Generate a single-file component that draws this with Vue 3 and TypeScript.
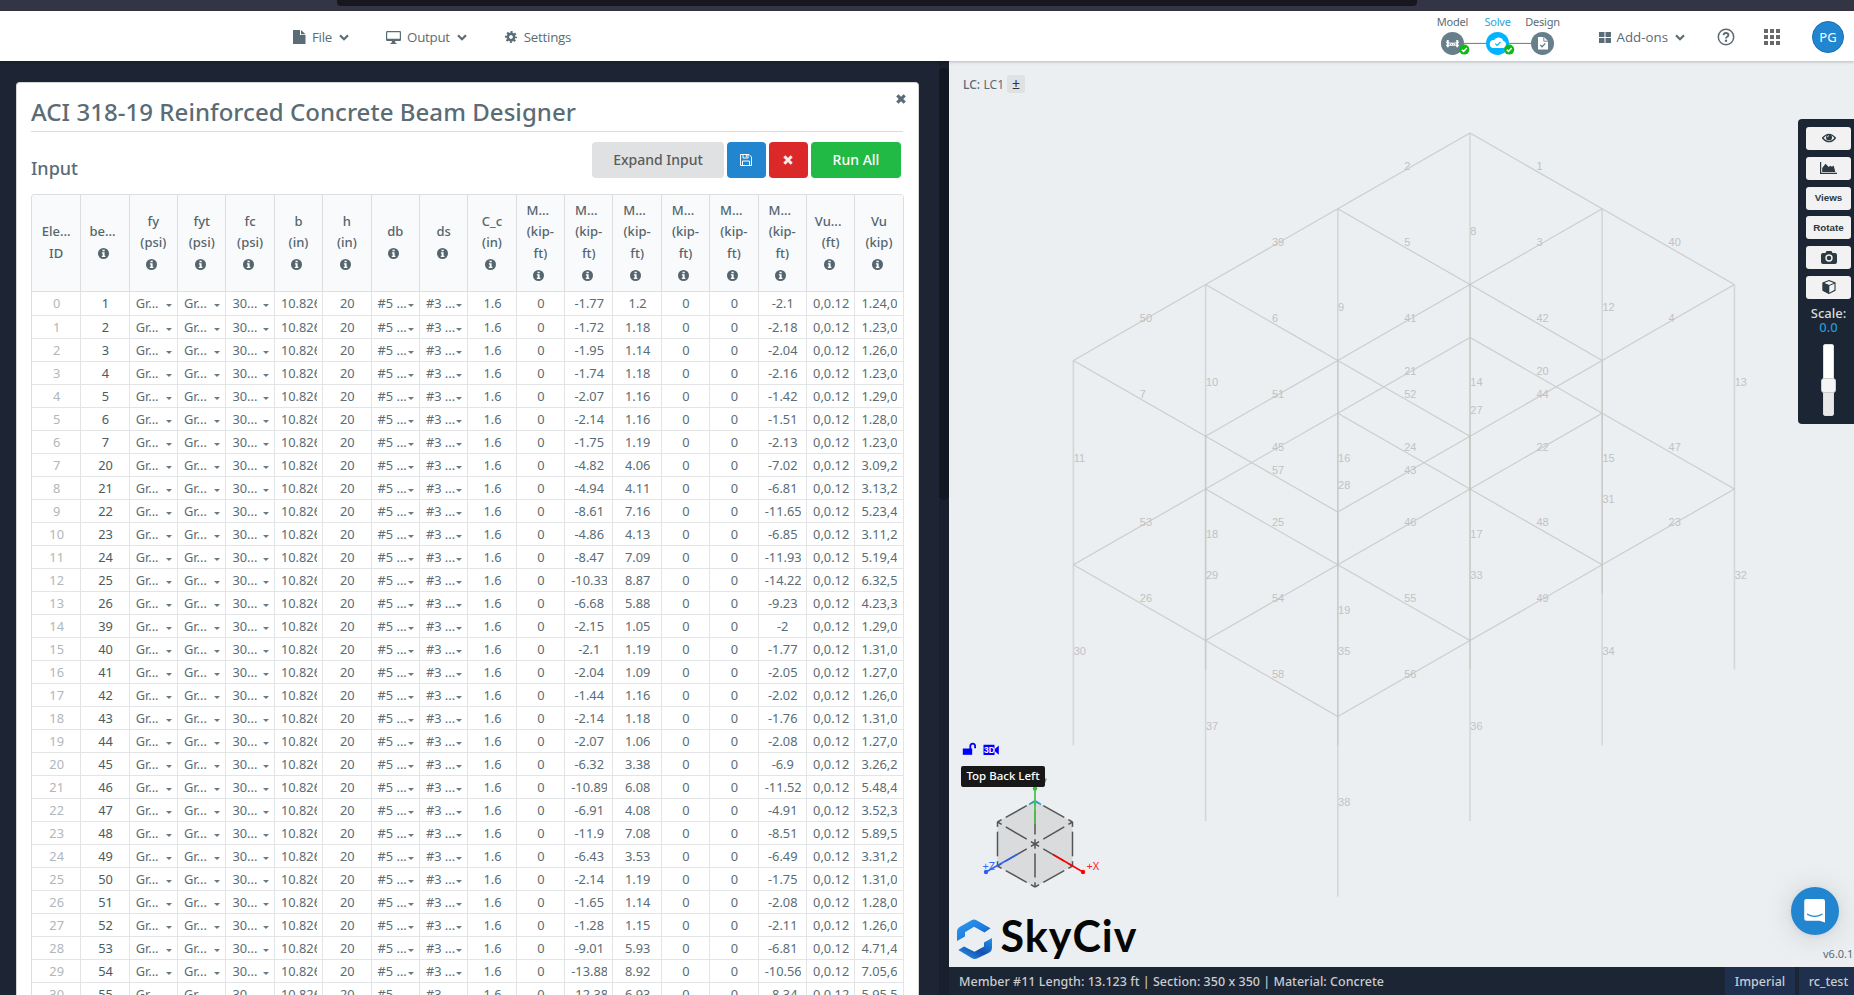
<script setup lang="ts">
interface Col { lines: string[]; info: boolean; shift?: boolean }

const cols: Col[] = [
  { lines: ['Ele...', 'ID'], info: false },
  { lines: ['be...'], info: true, shift: true },
  { lines: ['fy', '(psi)'], info: true },
  { lines: ['fyt', '(psi)'], info: true },
  { lines: ['fc', '(psi)'], info: true },
  { lines: ['b', '(in)'], info: true },
  { lines: ['h', '(in)'], info: true },
  { lines: ['db'], info: true },
  { lines: ['ds'], info: true },
  { lines: ['C_c', '(in)'], info: true },
  ...Array.from({ length: 6 }, () => ({ lines: ['M...', '(kip-', 'ft)'], info: true, shift: true })),
  { lines: ['Vu...', '(ft)'], info: true, shift: true },
  { lines: ['Vu', '(kip)'], info: true },
]

const data: [string, string, string, string, string][] = [
  ['1', '-1.77', '1.2', '-2.1', '1.24,0'],
  ['2', '-1.72', '1.18', '-2.18', '1.23,0'],
  ['3', '-1.95', '1.14', '-2.04', '1.26,0'],
  ['4', '-1.74', '1.18', '-2.16', '1.23,0'],
  ['5', '-2.07', '1.16', '-1.42', '1.29,0'],
  ['6', '-2.14', '1.16', '-1.51', '1.28,0'],
  ['7', '-1.75', '1.19', '-2.13', '1.23,0'],
  ['20', '-4.82', '4.06', '-7.02', '3.09,2'],
  ['21', '-4.94', '4.11', '-6.81', '3.13,2'],
  ['22', '-8.61', '7.16', '-11.65', '5.23,4'],
  ['23', '-4.86', '4.13', '-6.85', '3.11,2'],
  ['24', '-8.47', '7.09', '-11.93', '5.19,4'],
  ['25', '-10.33', '8.87', '-14.22', '6.32,5'],
  ['26', '-6.68', '5.88', '-9.23', '4.23,3'],
  ['39', '-2.15', '1.05', '-2', '1.29,0'],
  ['40', '-2.1', '1.19', '-1.77', '1.31,0'],
  ['41', '-2.04', '1.09', '-2.05', '1.27,0'],
  ['42', '-1.44', '1.16', '-2.02', '1.26,0'],
  ['43', '-2.14', '1.18', '-1.76', '1.31,0'],
  ['44', '-2.07', '1.06', '-2.08', '1.27,0'],
  ['45', '-6.32', '3.38', '-6.9', '3.26,2'],
  ['46', '-10.89', '6.08', '-11.52', '5.48,4'],
  ['47', '-6.91', '4.08', '-4.91', '3.52,3'],
  ['48', '-11.9', '7.08', '-8.51', '5.89,5'],
  ['49', '-6.43', '3.53', '-6.49', '3.31,2'],
  ['50', '-2.14', '1.19', '-1.75', '1.31,0'],
  ['51', '-1.65', '1.14', '-2.08', '1.28,0'],
  ['52', '-1.28', '1.15', '-2.11', '1.26,0'],
  ['53', '-9.01', '5.93', '-6.81', '4.71,4'],
  ['54', '-13.88', '8.92', '-10.56', '7.05,6'],
  ['55', '-12.38', '6.93', '-8.34', '5.95,5'],
]

interface Cell { t: string; k: string }
const rows: Cell[][] = data.map(([m, a, b, c, v], i) => [
  { t: String(i), k: 'idx' },
  { t: m, k: 'mem' },
  { t: 'Gr...', k: 'sel' },
  { t: 'Gr...', k: 'sel' },
  { t: '30...', k: 'sel' },
  { t: '10.826', k: 'num' },
  { t: '20', k: 'num' },
  { t: '#5 ...', k: 'sel' },
  { t: '#3 ...', k: 'sel' },
  { t: '1.6', k: 'num' },
  { t: '0', k: 'num' },
  { t: a, k: 'num' },
  { t: b, k: 'num' },
  { t: '0', k: 'num' },
  { t: '0', k: 'num' },
  { t: c, k: 'num' },
  { t: '0,0.12', k: 'num' },
  { t: v, k: 'num' },
])

// Frame model: isometric projection of a 4 x 3 grid on two levels
const px = (i: number, j: number) => 521 + 132.2 * (j - i)
const py = (i: number, j: number, z: number) => 72 + 75.8 * (i + j) + 204.4 * z
interface Line { x1: number; y1: number; x2: number; y2: number; id: number }
const iBeams = [
  [[2, 3, 4], [39, 41, 44], [50, 51, 43]],
  [[21, 22, 23], [45, 46, 49], [53, 54, 56]],
]
const jBeams = [
  [[1, 40], [5, 42], [6, 52], [7, 57]],
  [[20, 47], [24, 48], [25, 55], [26, 58]],
]
const columns = [
  [[8, 12, 13], [9, 14, 15], [10, 16, 17], [11, 18, 19]],
  [[27, 31, 32], [28, 33, 34], [29, 35, 36], [30, 37, 38]],
]
const beams: Line[] = []
const posts: Line[] = []
for (const z of [0, 1]) {
  iBeams[z].forEach((r, i) => r.forEach((id, j) =>
    beams.push({ x1: px(i, j), y1: py(i, j, z), x2: px(i + 1, j), y2: py(i + 1, j, z), id })))
  jBeams[z].forEach((r, i) => r.forEach((id, j) =>
    beams.push({ x1: px(i, j), y1: py(i, j, z), x2: px(i, j + 1), y2: py(i, j + 1, z), id })))
  columns[z].forEach((r, i) => r.forEach((id, j) => {
    const len = z === 0 ? 204.4 : id < 29 ? 153.4 : 180.4
    posts.push({ x1: px(i, j), y1: py(i, j, z), x2: px(i, j), y2: py(i, j, z) + len, id })
  }))
}
const members = [...beams, ...posts]

// View cube edges with short corner marks
const V = { t: [62, 18], ul: [24.5, 39], ur: [99.5, 39], c: [62, 61], ll: [24.5, 83], lr: [99.5, 83], b: [62, 104] } as Record<string, number[]>
const edgeKeys = ['t-ul', 't-ur', 'ul-ll', 'ur-lr', 'll-b', 'lr-b', 'ul-c', 'ur-c', 'll-c', 'lr-c', 't-c', 'c-b']
const cubeLines = edgeKeys.flatMap((k) => {
  const [a, b] = k.split('-').map((n) => V[n])
  return [[0, 0.11], [0.22, 0.78], [0.89, 1]].map(([s, e]) => ({
    x1: a[0] + (b[0] - a[0]) * s, y1: a[1] + (b[1] - a[1]) * s,
    x2: a[0] + (b[0] - a[0]) * e, y2: a[1] + (b[1] - a[1]) * e,
  }))
})
</script>

<template>
  <div class="page">
    <div class="browser"><div class="urlbar"></div></div>
    <header class="top">
      <nav class="menu">
        <div class="mi file">
          <svg width="13" height="14" viewBox="0 0 13 14"><path d="M0 0h7v5h5.5v9H0zM8 0l4.5 4.2H8z" fill="#5a6c75" /></svg>
          <span>File</span>
          <svg class="chev" width="10" height="7" viewBox="0 0 10 7"><path d="M1 1.3l4 4 4-4" /></svg>
        </div>
        <div class="mi output">
          <svg width="15" height="13" viewBox="0 0 15 13"><path d="M1.2 0h12.6Q15 0 15 1.2v7.6q0 1.2-1.2 1.2H9l.5 2h1v1h-6v-1h1L6 10H1.2Q0 10 0 8.800V1.200Q0 0 1.200 0zM1.200 1.200v6.600h12.600V1.200z" fill="#5a6c75" fill-rule="evenodd" /></svg>
          <span>Output</span>
          <svg class="chev" width="10" height="7" viewBox="0 0 10 7"><path d="M1 1.300l4 4 4-4" /></svg>
        </div>
        <div class="mi settings">
          <svg width="12" height="12" viewBox="-6 -6 12 12"><circle r="3.200" fill="none" stroke="#5a6c75" stroke-width="2.600" /><circle r="5" fill="none" stroke="#5a6c75" stroke-width="2" stroke-dasharray="2 1.927" stroke-dashoffset="1" /></svg>
          <span>Settings</span>
        </div>
      </nav>
      <div class="steps">
        <svg width="124" height="48" viewBox="0 0 124 48">
          <path d="M20 30.400h90" stroke="#5f7f88" stroke-width="1" />
          <circle cx="20.500" cy="30.400" r="11.500" fill="#667f8b" />
          <circle cx="65.500" cy="30.400" r="11.500" fill="#00b4ff" />
          <circle cx="110.500" cy="30.400" r="11.500" fill="#667f8b" />
          <path d="M15.800 27v7.300M25.200 27v7.300" stroke="#fff" stroke-width="1.900" fill="none" />
          <path d="M14 29q6.500 2.800 13 0M14 32.300h13M18.500 30v2M20.500 30.500v2M22.500 30v2" stroke="#fff" stroke-width="1.100" fill="none" />
          <path d="M61.500 35h9a3.500 3.500 0 0 0 .8-6.900 5 5 0 0 0-9.200-1.100A4 4 0 0 0 61.500 35z" fill="#fff" />
          <path d="M63.300 30.600l1.800 1.800 3.400-3.400" fill="none" stroke="#00b4ff" stroke-width="1.200" />
          <path d="M106 24h6l4 4v8.500h-10z" fill="#fff" /><path d="M111.800 24v4.200h4.200" fill="none" stroke="#667f8b" stroke-width=".9" />
          <path d="M108.300 32l1.800 1.800 3.200-3.400" fill="none" stroke="#667f8b" stroke-width="1.300" />
          <circle cx="32.300" cy="36.600" r="5" fill="#12b812" /><path d="M29.900 36.700l1.700 1.700 3.200-3.400" fill="none" stroke="#fff" stroke-width="1.500" />
          <circle cx="77.200" cy="36.600" r="5" fill="#12b812" /><path d="M74.800 36.700l1.700 1.700 3.200-3.400" fill="none" stroke="#fff" stroke-width="1.500" />
        </svg>
        <span class="st m">Model</span><span class="st s">Solve</span><span class="st d">Design</span>
      </div>
      <div class="mi addons">
        <svg width="12" height="11" viewBox="0 0 12 11"><path d="M0 0h5.500v4.900H0zM6.500 0H12v4.900H6.500zM0 5.900h5.500V11H0zM6.500 5.900H12V11H6.500z" fill="#5a6c75" /></svg>
        <span>Add-ons</span>
        <svg class="chev" width="10" height="7" viewBox="0 0 10 7"><path d="M1 1.300l4 4 4-4" /></svg>
      </div>
      <svg class="help" width="18" height="18" viewBox="0 0 18 18"><circle cx="9" cy="9" r="7.700" fill="none" stroke="#5a6c75" stroke-width="1.500" /><path d="M6.500 7.200Q6.800 5 9 5t2.400 1.900Q11.400 8 10.200 8.700 9 9.400 9 10.600" fill="none" stroke="#5a6c75" stroke-width="1.900" /><circle cx="9" cy="12.800" r="1.200" fill="#5a6c75" /></svg>
      <div class="apps"><i v-for="n in 9" :key="n"></i></div>
      <div class="avatar">PG</div>
    </header>

    <main class="body">
      <section class="left">
        <div class="card">
          <div class="title"><h1>ACI 318-19 Reinforced Concrete Beam Designer</h1>
            <svg class="close" width="10" height="10" viewBox="0 0 10 10"><path d="M1.300 1.300l7.400 7.400M8.700 1.300L1.300 8.700" stroke="#5a6c75" stroke-width="3.200" /></svg>
          </div>
          <div class="bar">
            <h2>Input</h2>
            <div class="btns">
              <button class="b grey">Expand Input</button>
              <button class="b blue"><svg width="12" height="12" viewBox="0 0 12 12"><path d="M.5.500h8.500l2.500 2.500v8.500H.5zM2.500 11.500v-4.500h7v4.500M3 .5v3.500h5V.5M6.300.8v2.400" fill="none" stroke="#fff" stroke-width="1" /></svg></button>
              <button class="b red"><svg width="10" height="10" viewBox="0 0 10 10"><path d="M1.300 1.300l7.400 7.400M8.700 1.300L1.300 8.700" stroke="#fff" stroke-width="3" opacity=".9" /></svg></button>
              <button class="b green">Run All</button>
            </div>
          </div>
          <div class="table">
            <div class="tr head">
              <div v-for="(c, i) in cols" :key="i" class="th">
                <span v-for="(l, k) in c.lines" :key="k" :class="{ shift: c.shift && k === 0 }">{{ l }}</span>
                <span v-if="c.info" class="info"><svg width="11" height="11" viewBox="0 0 11 11"><circle cx="5.500" cy="5.500" r="5.500" fill="#55656e" /><path d="M4.500 1.700h2.200v1.500H4.500zM3.900 4.200h2.700v3.600h.8v1.300H3.800V7.800h.9V5.500h-.8z" fill="#fff" /></svg></span>
              </div>
            </div>
            <div v-for="(r, i) in rows" :key="i" class="tr row">
              <div v-for="(c, k) in r" :key="k" class="td" :class="c.k">
                <span>{{ c.t }}</span><i v-if="c.k === 'sel'" class="caret"></i>
              </div>
            </div>
          </div>
        </div>
        <div class="scroll"><div class="thumb"></div></div>
      </section>

      <section class="viewer">
        <svg class="model" width="905" height="906" viewBox="0 0 905 906">
          <line v-for="m in beams" :key="m.id" :x1="m.x1" :y1="m.y1" :x2="m.x2" :y2="m.y2" class="beam" />
          <line v-for="m in posts" :key="m.id" :x1="m.x1" :y1="m.y1" :x2="m.x2" :y2="m.y2" class="post" />
          <text v-for="m in members" :key="m.id" :x="(m.x1 + m.x2) / 2 + 0.3" :y="(m.y1 + m.y2) / 2 - 0.5">{{ m.id }}</text>
        </svg>
        <div class="lc"><b>LC:</b> LC1 <span class="pm">±</span></div>

        <aside class="tools">
          <button><svg width="14" height="10" viewBox="0 0 14 10"><path d="M.5 5Q7-2.500 13.500 5 7 12.500.5 5z" fill="none" stroke="#2c3a42" stroke-width="1.200" /><circle cx="7" cy="4.500" r="3" fill="#2c3a42" /><path d="M5.400 4.300Q5.500 2.800 7 2.700" stroke="#fff" stroke-width=".8" fill="none" /></svg></button>
          <button><svg width="17" height="12" viewBox="0 0 17 12"><path d="M.6 0v11.400H17" fill="none" stroke="#2c3a42" stroke-width="1.200" /><path d="M2.200 10V6l3.300-4.200L8.700 5l1.500-1.200 1.800 1L13.600 3.500 15.400 10z" fill="#2c3a42" /></svg></button>
          <button>Views</button>
          <button>Rotate</button>
          <button><svg width="16" height="13" viewBox="0 0 16 13"><path d="M2 2h2.500L5.500 0h5l1 2H14q2 0 2 2v7q0 2-2 2H2q-2 0-2-2V4q0-2 2-2z" fill="#2c3a42" /><circle cx="8" cy="7" r="3" fill="none" stroke="#f3f3f3" stroke-width="1.400" /></svg></button>
          <button><svg width="14" height="14" viewBox="0 0 14 14"><path d="M7 .6l6 2.300v7.400L7 13.400 1 10.300V2.900z" fill="#f3f3f3" stroke="#2c3a42" stroke-width="1.100" /><path d="M1 3l6 2.500v7.900L1 10.300z" fill="#2c3a42" stroke="#2c3a42" stroke-width=".6" /><path d="M1 3l6 2.500L13 3" fill="none" stroke="#2c3a42" stroke-width="1" /></svg></button>
          <div class="scale">Scale:<em>0.0</em></div>
          <div class="slider"><div class="knob"></div></div>
        </aside>

        <svg class="viewicons" width="40" height="14" viewBox="0 0 40 14">
          <path d="M.8 6.500h9.400v6.300H.8z" fill="#00f" /><path d="M8.300 7V4.200q0-2.500 2.400-2.500T13.100 4.200v2" fill="none" stroke="#00f" stroke-width="1.800" />
          <path d="M21.500 2.700h11v10.300h-11zM32.300 7.500l4.500-4v9.200l-4.500-4z" fill="#00f" /><text x="22" y="11.200">3D</text>
        </svg>

        <svg class="cube" width="150" height="130" viewBox="0 0 150 130">
          <path d="M62 18L99.500 39v44L62 104 24.500 83V39z" fill="#dadbdd" />
          <line v-for="(l, i) in cubeLines" :key="i" v-bind="l" class="ce" />
          <path d="M56 21.500L62 18l6 3.500" fill="none" stroke="#2fa3cf" stroke-width="1.600" />
          <path d="M62 41V6" stroke="#4fc34c" stroke-width="1.800" /><circle cx="62" cy="5.500" r="2.200" fill="#35c435" />
          <path d="M80 71.500L110 89" stroke="#f00" stroke-width="1.500" /><circle cx="110" cy="89" r="2.200" fill="#f00" />
          <path d="M44 71.500L13 89" stroke="#3060ef" stroke-width="1.500" /><circle cx="13" cy="89" r="2.200" fill="#3060ef" />
          <path d="M71.500 -4l1.800 0-2 4.500" fill="none" stroke="#35a035" stroke-width="1" />
          <text x="113.500" y="87.300" fill="#f22">+X</text><text x="9.500" y="87.300" fill="#3a68f0">+Z</text>
        </svg>
        <div class="tip">Top Back Left</div>

        <svg class="logo" width="190" height="46" viewBox="0 0 190 46">
          <defs>
            <linearGradient id="lg" x1="0" y1="0" x2="1" y2="1"><stop offset="0" stop-color="#2f9bee" /><stop offset=".55" stop-color="#1f7fe0" /><stop offset="1" stop-color="#0e4fb0" /></linearGradient>
            <linearGradient id="lh" x1="1" y1="0" x2="0" y2="1"><stop offset="0" stop-color="#2196f0" /><stop offset=".5" stop-color="#1450ad" /><stop offset="1" stop-color="#2ea0f5" /></linearGradient>
          </defs>
          <path d="M1 24V15Q1 11.500 4 9.800L15.500 3.200Q18 2 20.500 3.200L34.500 11.300 28.500 15.500 18 9.800 9 15.200V19.500z" fill="url(#lg)" />
          <path d="M36 21v10q0 3-3 4.700L21.500 41.300Q18.500 42.500 16 41.300L2.300 33 8 29.500l10.500 5.200L28 29.500V25.500z" fill="url(#lh)" />
          <text x="44.500" y="34.500" textLength="136">SkyCiv</text>
        </svg>

        <div class="chat"><svg width="24" height="26" viewBox="0 0 24 26"><path d="M3.500 1h16.200q2.300 0 2.300 2.300V24.500l-5.500-1.800H3.500q-2.300 0-2.300-2.300V3.300Q1.200 1 3.500 1z" fill="#fff" /><path d="M4.500 16.200q7 4.500 14.500 0" fill="none" stroke="#2185d0" stroke-width="1.300" stroke-linecap="round" /></svg></div>
        <div class="ver">v6.0.1</div>

        <footer class="status">
          <span class="msg">Member #11 Length: 13.123 ft | Section: 350 x 350 | Material: Concrete</span>
          <span class="tag imp">Imperial</span>
          <span class="tag rc">rc_test</span>
        </footer>
      </section>
    </main>
  </div>
</template>

<style>
html, body { margin: 0; overflow: hidden; }
</style>

<style scoped>
.page { width: 1854px; height: 995px; overflow: hidden; display: flex; flex-direction: column; font-family: "Noto Sans", "Open Sans", sans-serif; color: #5a6c75; background: #1d2433; }
.page * { box-sizing: border-box; }
.browser { height: 11px; background: #333544; flex: none; }
.urlbar { width: 1080px; height: 6px; margin-left: 337px; background: #17181f; border-radius: 0 0 4px 4px; }
.top { height: 50px; flex: none; background: #fff; display: flex; align-items: center; position: relative; z-index: 3; box-shadow: 0 1px 3px rgba(0, 0, 0, .22); }
.menu { display: flex; align-items: center; flex: 1; padding-left: 293px; }
.mi { display: flex; align-items: center; font-family: "Open Sans", "Noto Sans", sans-serif; font-size: 13.300px; line-height: 20px; height: 20px; margin-top: 2px; }
.mi span { margin: 0 7px 0 6px; }
.menu .mi span { letter-spacing: -.25px; }
.chev path { fill: none; stroke: #5a6c75; stroke-width: 2.200; }
.output { margin-left: 37px; }
.settings { margin-left: 38px; }
.settings svg { margin-right: 1px; }
.steps { width: 140px; height: 50px; position: relative; margin-right: 27px; }
.steps > svg { position: absolute; left: 0; top: 2px; }
.st { position: absolute; top: 3px; font-size: 11px; line-height: 16px; width: 50px; text-align: center; letter-spacing: -.2px; }
.st.m { left: -4px; } .st.s { left: 41px; color: #2ea3d6; } .st.d { left: 86px; }
.help { margin: 2px 0 0 32px; }
.apps { display: grid; grid-template-columns: repeat(3, 4px); gap: 2px; margin: 2px 0 0 29px; }
.apps i { width: 4px; height: 4px; background: #686868; }
.avatar { width: 32px; height: 32px; border-radius: 50%; background: #2185d0; border: 1px solid #1a6fb0; color: #fff; font-size: 13px; display: flex; align-items: center; justify-content: center; margin: 2px 10px 0 32px; padding-bottom: 1px; }
.body { flex: 1; display: flex; min-height: 0; }
.left { width: 949px; background: #1d2433; display: flex; justify-content: space-between; overflow: hidden; }
.card { width: 903px; height: 960px; margin: 21px 0 0 16px; background: #fff; border-radius: 4px 4px 0 0; padding: 0 15px 0 14px; border: 1px solid #d4d4d5; border-bottom: 0; }
.title { height: 49px; border-bottom: 1px solid #dadcdd; display: flex; justify-content: space-between; }
h1 { margin: 12px 0 0; font-size: 24px; line-height: 34px; font-weight: 500; letter-spacing: .05px; white-space: nowrap; }
.close { margin: 11px -3px 0 0; }
.bar { height: 62px; display: flex; justify-content: space-between; }
h2 { margin: 24px 0 0; font-size: 18px; line-height: 24px; font-weight: 500; }
.btns { display: flex; gap: 3px; margin: 10px 2px 0 0; }
.b { height: 36px; border: 0; border-radius: 4px; padding: 0 0 1px; font: 500 14px "Noto Sans", sans-serif; color: #fff; display: flex; align-items: center; justify-content: center; }
.grey { width: 132px; background: #e0e1e2; color: #5b5b5b; }
.blue { width: 39px; background: #2185d0; padding-right: 1px; }
.red { width: 39px; background: #db2828; padding-right: 1px; }
.green { width: 90px; background: #21ba45; }
.table { width: 873px; border-left: 1px solid #dededf; border-radius: 4px 4px 0 0; overflow: hidden; border-top: 1px solid #dededf; }
.tr { display: grid; grid-template-columns: 49.300px repeat(17, 48.390px); }
.head { height: 97px; background: #f9fafb; font-size: 13px; font-weight: 500; }
.th { border-right: 1px solid #dededf; border-bottom: 1px solid #dededf; display: flex; flex-direction: column; align-items: center; justify-content: center; line-height: 21.600px; color: #55656e; }
.th .shift { margin-right: 5px; }
.info { height: 21.600px; display: flex; align-items: center; margin-right: 3px; }
.row { height: 23px; font-size: 12.800px; line-height: 22px; }
.row:nth-child(2) { height: 24px; line-height: 23px; }
.td { border-right: 1px solid #e3e4e5; border-bottom: 1px solid #e3e4e5; display: flex; justify-content: center; overflow: hidden; min-width: 0; padding-left: 1px; }
.td span { white-space: nowrap; }
.idx { color: #b0b7bb; }
.mem { color: #4b5b64; }
.num span { width: 36px; overflow: hidden; text-align: center; }
.sel { justify-content: space-between; padding: 0 5px 0 6px; align-items: center; }
.caret { border: 3.500px solid transparent; border-top-color: #687a83; border-bottom: 0; margin: 4px 0 0 -6px; }
.scroll { width: 10px; background: #1a1f2d; padding-top: 7px; }
.thumb { height: 432px; background: #111821; border-radius: 5px; }
.viewer { flex: 1; position: relative; background: #ebeff2; overflow: hidden; }
.model { position: absolute; left: 0; top: 0; }
.beam { stroke: #cdcdcb; stroke-width: 1.200; }
.post { stroke: #c2c2c0; stroke-opacity: .55; stroke-width: 1.600; }
.model text { font: 11px "Liberation Sans", sans-serif; fill: #c1c2c3; }
.lc { position: absolute; left: 14px; top: 14px; font-size: 12px; line-height: 20px; display: flex; gap: 3.500px; }
.lc b { font-weight: 500; }
.pm { width: 18px; height: 18px; background: #dfe1e3; border-radius: 3px; text-align: center; line-height: 17px; color: #333; font-size: 14px; margin-left: -.5px; }
.tools { position: absolute; right: 0; top: 58px; width: 56px; height: 305px; background: #1c2533; border-radius: 4px 0 0 4px; padding: 8px 3px 0 8px; }
.tools button { display: flex; align-items: center; justify-content: center; width: 45px; height: 23px; margin: 0 0 6.800px; padding: 0 0 1px; border: 0; border-radius: 3px; background: #f2f2f2; font: bold 9.800px "Liberation Sans", sans-serif; color: #2c3a42; }
.scale { font-size: 13px; line-height: 14.300px; text-align: center; color: #dadada; font-weight: 500; margin-top: 2px; }
.scale em { display: block; font-style: normal; color: #2596d1; }
.slider { width: 11px; height: 72px; margin: 10px auto 0; background: linear-gradient(#fff 60%, #e8e8e8 60%); border: 1px solid #ddd; border-radius: 2px; padding-top: 33px; }
.knob { width: 15px; height: 15px; margin-left: -3px; background: #f5f5f5; border: 1px solid #ccc; border-radius: 3px; }
.viewicons { position: absolute; left: 13px; top: 681px; }
.viewicons text { font: bold 8.500px "Liberation Sans", sans-serif; fill: #fff; }
.cube { position: absolute; left: 24px; top: 722px; overflow: visible; }
.ce { stroke: #555; stroke-width: 1.500; }
.cube text { font: 11px "Noto Sans", sans-serif; }
.tip { position: absolute; left: 12px; top: 705px; width: 84px; height: 21px; background: #181818; border-radius: 2px; color: #fff; font-size: 11.500px; font-weight: 500; line-height: 20px; text-align: center; white-space: nowrap; }
.logo { position: absolute; left: 7px; top: 856px; }
.logo text { font: 700 43px Lato, sans-serif; fill: #060606; }
.chat { position: absolute; left: 842px; top: 826px; width: 48px; height: 48px; border-radius: 50%; background: #2185d0; display: flex; align-items: center; justify-content: center; box-shadow: 0 1px 6px rgba(0, 0, 0, .06), 0 2px 30px rgba(0, 0, 0, .13); }
.ver { position: absolute; left: 874px; top: 884px; font-size: 11px; line-height: 18px; }
.status { position: absolute; left: 0; right: 0; bottom: 0; height: 28px; background: #1c2533; display: flex; gap: 4px; color: #c9cccf; font-size: 12.500px; font-weight: 500; line-height: 29px; white-space: nowrap; }
.msg { flex: 1; padding-left: 10px; letter-spacing: .02px; }
.tag { background: #1f304f; text-align: center; }
.imp { width: 70px; }
.rc { width: 55px; padding-left: 4px; }
</style>
